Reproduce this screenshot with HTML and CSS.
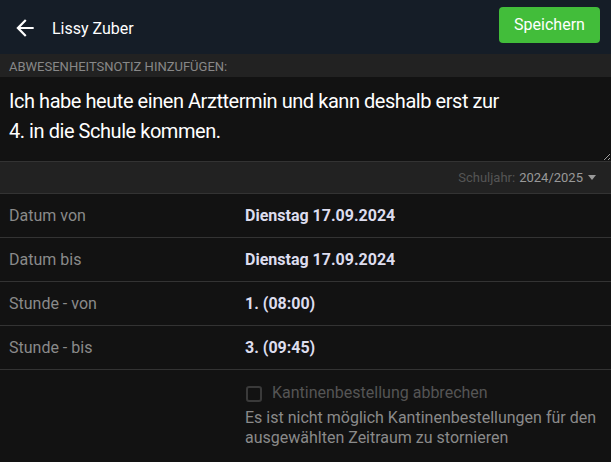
FILE: index.html
```html
<!DOCTYPE html>
<html lang="de">
<head>
  <meta charset="UTF-8" />
  <meta name="viewport" content="width=device-width, initial-scale=1.0"/>
  <title>Abwesenheitsnotiz</title>
  <link rel="stylesheet" href="styles.css">
</head>
<body>
  <header class="topbar">
    <button class="back" aria-label="Zurück">
      <svg width="26" height="26" viewBox="0 0 24 24"><path d="M20 11H7.83l5.59-5.59L12 4l-8 8 8 8 1.41-1.41L7.83 13H20v-2z" fill="#fff"/></svg>
    </button>
    <h1>Lissy Zuber</h1>
    <button class="save">Speichern</button>
  </header>

  <div class="section-label">Abwesenheitsnotiz hinzufügen:</div>
  <textarea class="note" rows="2">Ich habe heute einen Arzttermin und kann deshalb erst zur 4. in die Schule kommen.</textarea>

  <div class="year-bar">
    <span class="year-label">Schuljahr:</span> <span class="year-value">2024/2025</span>
    <span class="caret"></span>
  </div>

  <!-- Details -->
  <div class="rows">
    <div class="row"><span class="key">Datum von</span><span class="val">Dienstag 17.09.2024</span></div>
    <div class="row"><span class="key">Datum bis</span><span class="val">Dienstag 17.09.2024</span></div>
    <div class="row"><span class="key">Stunde - von</span><span class="val">1. (08:00)</span></div>
    <div class="row"><span class="key">Stunde - bis</span><span class="val">3. (09:45)</span></div>
    <div class="row canteen">
      <span class="key"></span>
      <div class="val">
        <label class="check"><span class="box"></span>Kantinenbestellung abbrechen</label>
        <p class="hint">Es ist nicht möglich Kantinenbestellungen für den ausgewählten Zeitraum zu stornieren</p>
      </div>
    </div>
  </div>
</body>
</html>
```

FILE: styles.css
```css
:root {
  --bg-head: #151d27;
  --bg-bar: #222222;
  --bg-page: #121212;
  --line: #333333;
  --muted: #8a8a8a;
  --dim: #555555;
  --green: #42bd3a;
}
* { box-sizing: border-box; margin: 0; padding: 0; }
body {
  background: var(--bg-page);
  color: #fff;
  font-family: Roboto, "Liberation Sans", Arial, sans-serif;
  width: 611px;
  height: 462px;
  overflow: hidden;
}

/* CABECERA */
.topbar {
  height: 54px;
  background: var(--bg-head);
  display: flex;
  align-items: center;
  padding: 0 11px 0 12px;
}
.back {
  background: none;
  border: 0;
  display: flex;
  width: 26px;
  margin-right: 14px;
  margin-top: 1px;
}
.topbar h1 {
  font-size: 16px;
  font-weight: 400;
  flex: 1;
  margin-top: 2px;
}
.save {
  background: var(--green);
  color: #fff;
  border: 0;
  border-radius: 4px;
  font-family: inherit;
  font-size: 16px;
  width: 101px;
  height: 36px;
  margin-top: -5px;
}

.section-label {
  background: var(--bg-bar);
  color: #888;
  font-size: 13px;
  text-transform: uppercase;
  height: 23px;
  line-height: 25px;
  padding-left: 9px;
}
.note {
  display: block;
  width: 100%;
  height: 85px;
  background: var(--bg-page);
  color: #fff;
  border: 0;
  border-bottom: 1px solid var(--line);
  font-family: inherit;
  font-size: 20px;
  letter-spacing: -0.45px;
  line-height: 30px;
  padding: 9px 100px 0 9px;
  resize: vertical;
  outline: none;
}

.year-bar {
  background: var(--bg-bar);
  height: 32px;
  display: flex;
  align-items: center;
  justify-content: flex-end;
  padding-right: 15px;
  font-size: 13px;
  border-bottom: 1px solid var(--line);
}
.year-label { color: var(--dim); margin-right: 4px; }
.year-value { color: #999; }
.caret {
  width: 0; height: 0;
  border-left: 4px solid transparent;
  border-right: 4px solid transparent;
  border-top: 5px solid #999;
  margin-left: 5px;
}

.row {
  display: flex;
  align-items: center;
  height: 44px;
  border-bottom: 1px solid var(--line);
  font-size: 16px;
}
.key {
  width: 245px;
  padding-left: 9px;
  color: var(--muted);
}
.val {
  color: #dde;
  font-weight: 700;
}
.canteen {
  height: auto;
  border-bottom: 0;
  align-items: flex-start;
  padding-top: 13px;
}
.canteen .val { font-weight: 400; flex: 1; padding-right: 10px; }
.check {
  display: flex;
  align-items: center;
  color: var(--dim);
  line-height: 20px;
}
.box {
  width: 16px;
  height: 16px;
  border: 2px solid #3a3a3a;
  border-radius: 3px;
  margin: 2px 10px 0 1px;
}
.hint {
  color: var(--muted);
  line-height: 20px;
  margin-top: 5px;
}
```
